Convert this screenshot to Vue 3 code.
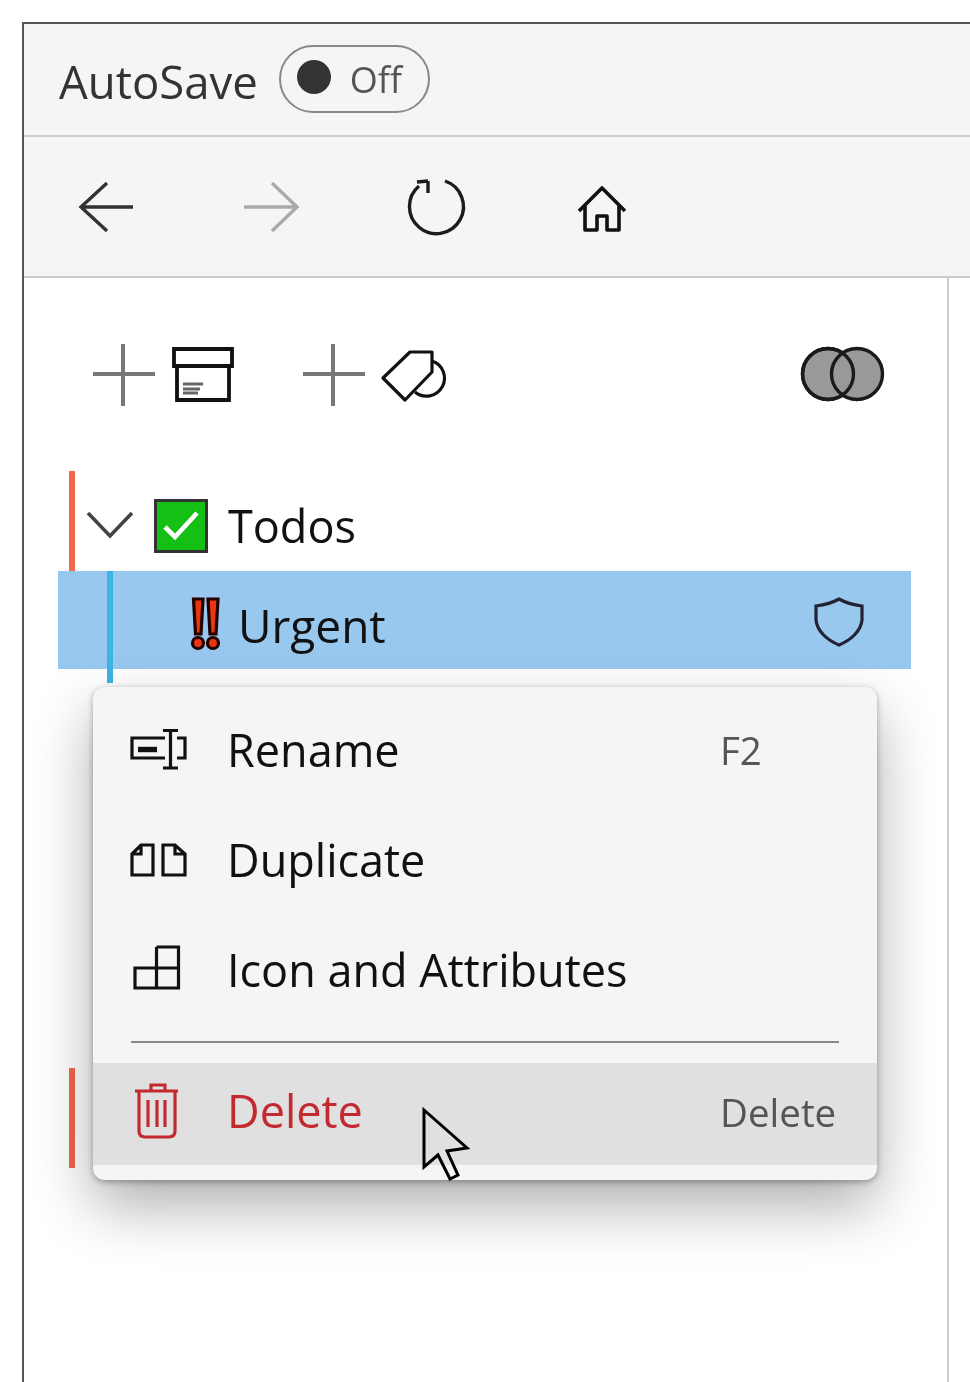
<template>
  <div class="window">
    <div class="titlebar">
      <span class="autosave">AutoSave</span>
      <div class="toggle">
        <span class="knob"></span>
        <span class="toggle-text">Off</span>
      </div>
    </div>

    <div class="navbar">
      <svg class="nav-icon" viewBox="70 170 400 72" width="400" height="72" fill="none" stroke-width="3.4">
        <path d="M133 206H81M107 182 81 206 107 230" stroke="#333" />
        <path d="M244 206H297M272 182 297 206 272 230" stroke="#aaa" />
        <path d="M445 180A27 27 0 1 1 419 185M428 180 417 181M428 180V192" stroke="#1c1c1c" />
      </svg>
      <svg class="home-icon" viewBox="570 180 64 56" width="64" height="56" fill="none" stroke="#111" stroke-width="3.6" stroke-linejoin="round">
        <path d="M579 211 602 188 625 211M585 206V230H597V216H607V230H619V206" />
      </svg>
    </div>

    <div class="main">
      <div class="sidebar">
        <div class="toolbar">
          <svg viewBox="90 340 147 70" width="147" height="70" fill="none">
            <path d="M93 374H155M123 344V406" stroke="#777" stroke-width="4" />
            <path d="M174 349H232V366H174ZM177 366V400H229V366" stroke="#111" stroke-width="3.8" />
            <path d="M183 384H203M183 389H200M183 393H198" stroke="#666" stroke-width="3" />
          </svg>
          <svg class="tool-gap" viewBox="300 340 147 70" width="147" height="70" fill="none">
            <path d="M303 374H365M333 344V406" stroke="#777" stroke-width="4" />
            <path d="M410 352H432V372L405 400 383 378Z" stroke="#111" stroke-width="3.2" stroke-linejoin="round" />
            <path d="M432 361A18 18 0 1 1 415 392" stroke="#111" stroke-width="3.2" />
          </svg>
          <svg class="venn" viewBox="800 345 86 60" width="86" height="60">
            <circle cx="828" cy="374" r="25.5" fill="#999" stroke="#1a1a1a" stroke-width="3.4" />
            <circle cx="857" cy="374" r="25.5" fill="#999" stroke="#1a1a1a" stroke-width="3.4" />
            <circle cx="828" cy="374" r="25.5" fill="none" stroke="#1a1a1a" stroke-width="3.4" />
          </svg>
        </div>

        <div class="tree">
          <div class="row row-todos">
            <span class="accent"></span>
            <svg class="chevron" viewBox="84 506 52 36" width="52" height="36" fill="none" stroke="#444" stroke-width="3.6">
              <path d="M88 512 110 535 132 512" />
            </svg>
            <svg class="check" viewBox="152 497 58 58" width="58" height="58">
              <rect x="155.500" y="500.500" width="51" height="51" fill="#14c014" stroke="#333" stroke-width="3" />
              <path d="M165 527 175 537 197 513" fill="none" stroke="#fff" stroke-width="4.600" />
            </svg>
            <span class="label">Todos</span>
          </div>

          <div class="row row-urgent">
            <span class="accent-blue"></span>
            <svg class="urgent" viewBox="190 598 32 56" width="32" height="56" stroke="#200" stroke-width="3.200" fill="#e8360f">
              <path d="M193.500 601H203L201 636H195.500Z" />
              <path d="M208 601H218L216 636H210Z" />
              <circle cx="198" cy="645" r="5.500" />
              <circle cx="213" cy="645" r="5.500" />
            </svg>
            <span class="label">Urgent</span>
            <svg class="shield" viewBox="812 595 54 54" width="54" height="54" fill="none" stroke="#223" stroke-width="3.200">
              <path d="M839 599C832 603 824 605 816 606V620C817 631 827 640 839 645 851 640 861 631 862 620V606C854 605 846 603 839 599Z" />
            </svg>
          </div>

          <div class="row row-hidden">
            <span class="accent"></span>
          </div>

          <div class="menu">
            <div class="menu-item">
              <svg viewBox="128 720 60 60" width="60" height="60" fill="none" stroke="#111" stroke-width="3.2">
                <path d="M165 738H132V758H165M177 738H185V758H177M163 730.500H178M163 768H178M170.500 730.500V768" />
                <path d="M138 749.500H157" stroke-width="5.400" />
              </svg>
              <span class="item-text">Rename</span>
              <span class="shortcut">F2</span>
            </div>
            <div class="menu-item">
              <svg viewBox="128 830 60 60" width="60" height="60" fill="none" stroke="#111" stroke-width="3.2">
                <path d="M153 845H141L132 854V875H153ZM141 845V854H132" />
                <path d="M163 845H175L185 854V875H163ZM175 845V854H185" />
              </svg>
              <span class="item-text">Duplicate</span>
            </div>
            <div class="menu-item">
              <svg viewBox="128 940 60 60" width="60" height="60" fill="none" stroke="#111" stroke-width="3.2">
                <path d="M156.500 947H178.500V988H135V968H178.500M156.500 947V988" />
              </svg>
              <span class="item-text">Icon and Attributes</span>
            </div>
            <div class="menu-sep"></div>
            <div class="menu-item menu-item-delete">
              <svg viewBox="128 1084 60 60" width="60" height="60" fill="none" stroke="#c22a30" stroke-width="3.200">
                <path d="M135 1091H178M151 1091V1085H165V1091M139 1091V1131Q139 1137 145 1137H169Q175 1137 175 1131V1091M148 1100V1127M157 1100V1127M165 1100V1127" />
              </svg>
              <span class="item-text">Delete</span>
              <span class="shortcut">Delete</span>
            </div>
          </div>

          <svg class="pointer" viewBox="420 1106 52 78" width="52" height="78" fill="none" stroke="#000" stroke-width="3">
            <path d="M424 1110 467 1148 447 1151 458 1175 450 1179 438 1155 424 1167Z" />
          </svg>
        </div>
      </div>
    </div>
  </div>
</template>

<script setup>
</script>

<style>
  html, body {
    background: #fff;
    overflow: hidden;
    height: 100%;
  }
</style>

<style scoped>
  * {
    box-sizing: border-box;
  }
  svg {
    display: block;
    flex: none;
    overflow: visible;
  }
  .window {
    margin: 22px -20px 0 22px;
    height: 1380px;
    overflow: hidden;
    border-top: 2px solid #555;
    border-left: 2px solid #555;
    display: flex;
    flex-direction: column;
    font-family: "Open Sans", "Liberation Sans", sans-serif;
    color: #111;
    filter: blur(0.6px);
  }
  .titlebar {
    height: 113px;
    flex: none;
    background: #f5f5f5;
    border-bottom: 2px solid #ccc;
    display: flex;
    align-items: center;
    padding-left: 35px;
  }
  .autosave {
    font-size: 45.500px;
    color: #333;
    line-height: 1;
    margin-top: 4px;
  }
  .toggle {
    margin-left: 21px;
    width: 151px;
    height: 68px;
    border: 2px solid #888;
    border-radius: 34px;
    display: flex;
    align-items: center;
    padding-left: 16px;
    margin-top: -2px;
  }
  .knob {
    width: 34px;
    height: 34px;
    border-radius: 50%;
    background: #333;
    margin-top: -3px;
  }
  .toggle-text {
    margin-left: 19px;
    font-size: 36px;
    color: #555;
    line-height: 1;
    margin-top: 3px;
  }
  .navbar {
    height: 141px;
    flex: none;
    background: #f5f5f5;
    border-bottom: 2px solid #ccc;
    display: flex;
    align-items: center;
    padding-left: 46px;
  }
  .home-icon {
    margin-left: 100px;
    margin-top: 2px;
  }
  .main {
    flex: 1;
    display: flex;
    min-height: 0;
  }
  .sidebar {
    width: 925px;
    border-right: 2px solid #ccc;
    padding: 0 36px 0 34px;
    background: #fff;
  }
  .toolbar {
    height: 193px;
    padding: 62px 0 0 32px;
    display: flex;
    align-items: flex-start;
  }
  .tool-gap {
    margin-left: 63px;
  }
  .venn {
    margin-left: auto;
    margin-right: 25px;
    margin-top: 5px;
  }
  .tree {
    position: relative;
  }
  .row {
    display: flex;
    align-items: center;
    font-size: 46px;
    line-height: 1;
  }
  .row-todos {
    height: 100px;
    font-size: 45px;
  }
  .accent {
    width: 6px;
    height: 100%;
    margin-left: 11px;
    background: #f4664a;
  }
  .chevron {
    margin-left: 9px;
    margin-top: 8px;
  }
  .check {
    margin-left: 16px;
    margin-top: 10px;
  }
  .label {
    margin-left: 18px;
    margin-top: 9px;
  }
  .row-urgent {
    height: 98px;
    background: #99c8ef;
    position: relative;
    padding-left: 132px;
  }
  .accent-blue {
    position: absolute;
    left: 49px;
    top: 0;
    bottom: -14px;
    width: 6px;
    background: #3db5e6;
  }
  .urgent {
    margin-top: 8px;
  }
  .row-urgent .label {
    margin-left: 16px;
  }
  .shield {
    margin-left: auto;
    margin-right: 45px;
    margin-top: 3px;
  }
  .row-hidden {
    height: 100px;
    margin-top: 399px;
  }
  .menu {
    position: absolute;
    left: 35px;
    top: 216px;
    width: 784px;
    height: 493px;
    padding-top: 8px;
    background: #f5f5f5;
    border-radius: 12px;
    box-shadow: 0 26px 60px rgba(0, 0, 0, 0.32), 0 2px 6px rgba(0, 0, 0, 0.32);
  }
  .menu-item {
    height: 110px;
    display: flex;
    align-items: center;
    padding-left: 35px;
    font-size: 45px;
    line-height: 1;
  }
  .item-text {
    margin-left: 39px;
    margin-top: -2px;
  }
  .shortcut {
    margin-left: auto;
    width: 157px;
    font-size: 38.500px;
    color: #555;
  }
  .menu-sep {
    height: 2px;
    margin: 16px 38px 20px;
    background: #888;
  }
  .menu-item-delete {
    height: 102px;
    background: #e0e0e0;
    color: #c22a30;
  }
  .menu-item-delete .item-text {
    margin-top: -8px;
  }
  .menu-item-delete .shortcut {
    color: #555;
    margin-top: -4px;
  }
  .pointer {
    position: absolute;
    left: 362px;
    top: 635px;
  }
</style>
